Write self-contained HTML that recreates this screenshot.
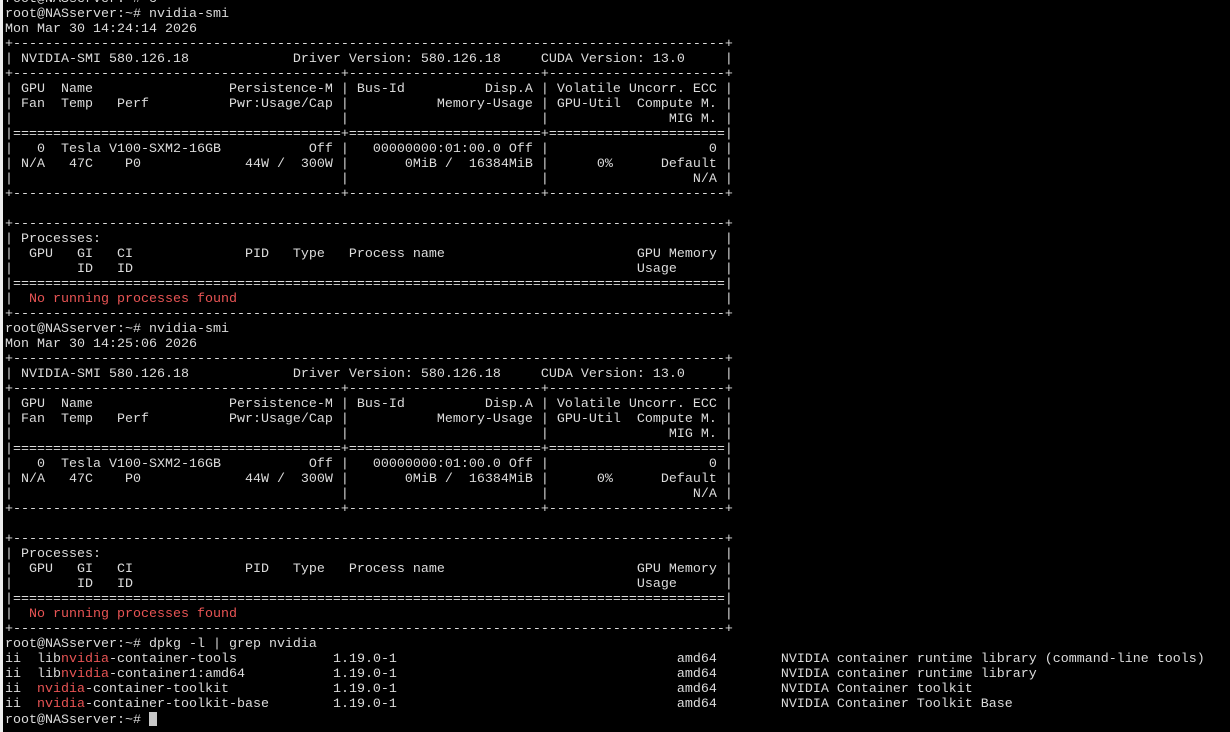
<!DOCTYPE html>
<html><head><meta charset="utf-8"><style>
html,body{margin:0;padding:0;background:#000;width:1230px;height:732px;overflow:hidden}
body{border-left:3px solid #eee;box-sizing:border-box}
pre{margin:0;position:absolute;left:5px;top:-8px;font-family:"Liberation Mono","DejaVu Sans Mono",monospace;font-size:13.33px;line-height:15px;color:#dcdcdc;white-space:pre}
.r{color:#e85454}
.c{display:inline-block;width:8px;height:14px;background:#c8c8c8;vertical-align:-3px}
</style></head><body><pre>root@NASserver:~# c
root@NASserver:~# nvidia-smi
Mon Mar 30 14:24:14 2026
+-----------------------------------------------------------------------------------------+
| NVIDIA-SMI 580.126.18             Driver Version: 580.126.18     CUDA Version: 13.0     |
+-----------------------------------------+------------------------+----------------------+
| GPU  Name                 Persistence-M | Bus-Id          Disp.A | Volatile Uncorr. ECC |
| Fan  Temp   Perf          Pwr:Usage/Cap |           Memory-Usage | GPU-Util  Compute M. |
|                                         |                        |               MIG M. |
|=========================================+========================+======================|
|   0  Tesla V100-SXM2-16GB           Off |   00000000:01:00.0 Off |                    0 |
| N/A   47C    P0             44W /  300W |       0MiB /  16384MiB |      0%      Default |
|                                         |                        |                  N/A |
+-----------------------------------------+------------------------+----------------------+

+-----------------------------------------------------------------------------------------+
| Processes:                                                                              |
|  GPU   GI   CI              PID   Type   Process name                        GPU Memory |
|        ID   ID                                                               Usage      |
|=========================================================================================|
|  <span class="r">No running processes found</span>                                                             |
+-----------------------------------------------------------------------------------------+
root@NASserver:~# nvidia-smi
Mon Mar 30 14:25:06 2026
+-----------------------------------------------------------------------------------------+
| NVIDIA-SMI 580.126.18             Driver Version: 580.126.18     CUDA Version: 13.0     |
+-----------------------------------------+------------------------+----------------------+
| GPU  Name                 Persistence-M | Bus-Id          Disp.A | Volatile Uncorr. ECC |
| Fan  Temp   Perf          Pwr:Usage/Cap |           Memory-Usage | GPU-Util  Compute M. |
|                                         |                        |               MIG M. |
|=========================================+========================+======================|
|   0  Tesla V100-SXM2-16GB           Off |   00000000:01:00.0 Off |                    0 |
| N/A   47C    P0             44W /  300W |       0MiB /  16384MiB |      0%      Default |
|                                         |                        |                  N/A |
+-----------------------------------------+------------------------+----------------------+

+-----------------------------------------------------------------------------------------+
| Processes:                                                                              |
|  GPU   GI   CI              PID   Type   Process name                        GPU Memory |
|        ID   ID                                                               Usage      |
|=========================================================================================|
|  <span class="r">No running processes found</span>                                                             |
+-----------------------------------------------------------------------------------------+
root@NASserver:~# dpkg -l | grep nvidia
ii  lib<span class="r">nvidia</span>-container-tools            1.19.0-1                                   amd64        NVIDIA container runtime library (command-line tools)
ii  lib<span class="r">nvidia</span>-container1:amd64           1.19.0-1                                   amd64        NVIDIA container runtime library
ii  <span class="r">nvidia</span>-container-toolkit             1.19.0-1                                   amd64        NVIDIA Container toolkit
ii  <span class="r">nvidia</span>-container-toolkit-base        1.19.0-1                                   amd64        NVIDIA Container Toolkit Base
root@NASserver:~# <span class="c"></span></pre></body></html>
